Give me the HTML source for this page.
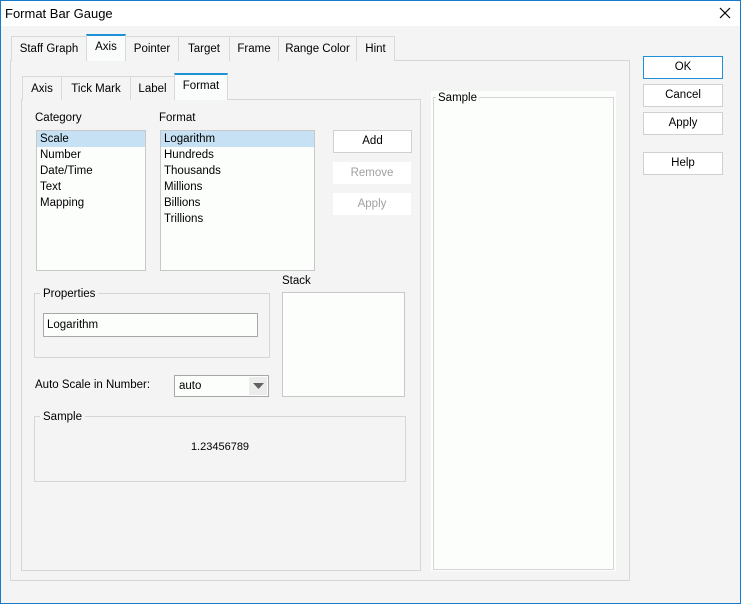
<!DOCTYPE html>
<html><head><style>
*{box-sizing:border-box;margin:0;padding:0}
body{width:741px;height:604px;background:#f3f4f3;font-family:"Liberation Sans",sans-serif;font-size:11.5px;color:#000;position:relative;overflow:hidden}
.a{position:absolute}
.win{left:0;top:0;width:741px;height:604px;border:1px solid #1979ca}
.title{left:1px;top:1px;width:739px;height:25px;background:#fff}
.tab{position:absolute;border:1px solid #d9d9d9;border-bottom:none;background:#f3f4f3;text-align:center;line-height:24px}
.sel{border-top:2px solid #1e90d8;background:#fafcfb;line-height:22px}
.box{position:absolute;border:1px solid #d6d6d6}
.wbox{position:absolute;border:1px solid #c8c8c8;background:#fcfefc}
.btn{position:absolute;background:#fff;border:1px solid #d0d0d0;text-align:center;line-height:21px}
.row{height:16px;line-height:16px;padding-left:3px}
.lbl{position:absolute;background:#f3f4f3;padding:0 3px;line-height:14px}
</style></head><body>
<div class="a win"></div>
<div class="a title"></div>
<div class="a" style="left:5px;top:6px;font-size:13px">Format Bar Gauge</div>
<svg class="a" style="left:719px;top:7px" width="12" height="12"><path d="M1 1L11 11M11 1L1 11" stroke="#000" stroke-width="1.2"/></svg>

<div class="box" style="left:10px;top:60px;width:620px;height:521px"></div>
<div class="tab" style="left:11px;top:36px;width:76px;height:25px">Staff Graph</div>
<div class="tab sel" style="left:86px;top:34px;width:40px;height:27px">Axis</div>
<div class="tab" style="left:125px;top:36px;width:54px;height:25px">Pointer</div>
<div class="tab" style="left:178px;top:36px;width:52px;height:25px">Target</div>
<div class="tab" style="left:229px;top:36px;width:50px;height:25px">Frame</div>
<div class="tab" style="left:278px;top:36px;width:79px;height:25px">Range Color</div>
<div class="tab" style="left:356px;top:36px;width:39px;height:25px">Hint</div>

<div class="box" style="left:21px;top:99px;width:400px;height:472px"></div>
<div class="tab" style="left:22px;top:76px;width:40px;height:24px">Axis</div>
<div class="tab" style="left:61px;top:76px;width:70px;height:24px">Tick Mark</div>
<div class="tab" style="left:130px;top:76px;width:45px;height:24px">Label</div>
<div class="tab sel" style="left:174px;top:73px;width:54px;height:27px">Format</div>

<div class="a" style="left:35px;top:112px">Category</div>
<div class="wbox" style="left:36px;top:130px;width:110px;height:141px">
<div class="row" style="background:#c5e1f3">Scale</div><div class="row">Number</div><div class="row">Date/Time</div><div class="row">Text</div><div class="row">Mapping</div></div>
<div class="a" style="left:159px;top:112px">Format</div>
<div class="wbox" style="left:160px;top:130px;width:155px;height:141px">
<div class="row" style="background:#c5e1f3">Logarithm</div><div class="row">Hundreds</div><div class="row">Thousands</div><div class="row">Millions</div><div class="row">Billions</div><div class="row">Trillions</div></div>
<div class="btn" style="left:333px;top:130px;width:79px;height:23px">Add</div>
<div class="btn" style="left:333px;top:162px;width:78px;height:22px;border-color:#fff;color:#a0a0a0">Remove</div>
<div class="btn" style="left:333px;top:193px;width:78px;height:22px;border-color:#fff;color:#a0a0a0">Apply</div>

<div class="box" style="left:34px;top:293px;width:236px;height:65px"></div>
<div class="lbl" style="left:40px;top:287px">Properties</div>
<div class="wbox" style="left:43px;top:313px;width:215px;height:24px;border-color:#a8a8a8;line-height:22px;padding-left:3px">Logarithm</div>
<div class="a" style="left:282px;top:275px">Stack</div>
<div class="wbox" style="left:282px;top:292px;width:123px;height:105px"></div>
<div class="a" style="left:35px;top:379px">Auto Scale in Number:</div>
<div class="wbox" style="left:174px;top:375px;width:95px;height:22px;border-color:#a8a8a8;line-height:20px;padding-left:4px">auto
<div class="a" style="left:74px;top:1px;width:18px;height:18px;background:#ececec"></div>
<svg class="a" style="left:78px;top:7px" width="11" height="6"><path d="M0 0H11L5.5 6Z" fill="#606060"/></svg></div>
<div class="box" style="left:34px;top:416px;width:372px;height:66px"></div>
<div class="lbl" style="left:40px;top:410px">Sample</div>
<div class="a" style="left:34px;top:441px;width:372px;text-align:center;font-size:11px">1.23456789</div>

<div class="a" style="left:431px;top:91px;width:185px;height:480px;background:#fcfefc"></div>
<div class="box" style="left:433px;top:97px;width:181px;height:473px"></div>
<div class="lbl" style="left:436px;top:91px;background:#fcfefc;padding:0 2px">Sample</div>

<div class="btn" style="left:643px;top:56px;width:80px;height:23px;border-color:#1e90d8">OK</div>
<div class="btn" style="left:643px;top:84px;width:80px;height:23px">Cancel</div>
<div class="btn" style="left:643px;top:112px;width:80px;height:23px">Apply</div>
<div class="btn" style="left:643px;top:152px;width:80px;height:23px">Help</div>
</body></html>
